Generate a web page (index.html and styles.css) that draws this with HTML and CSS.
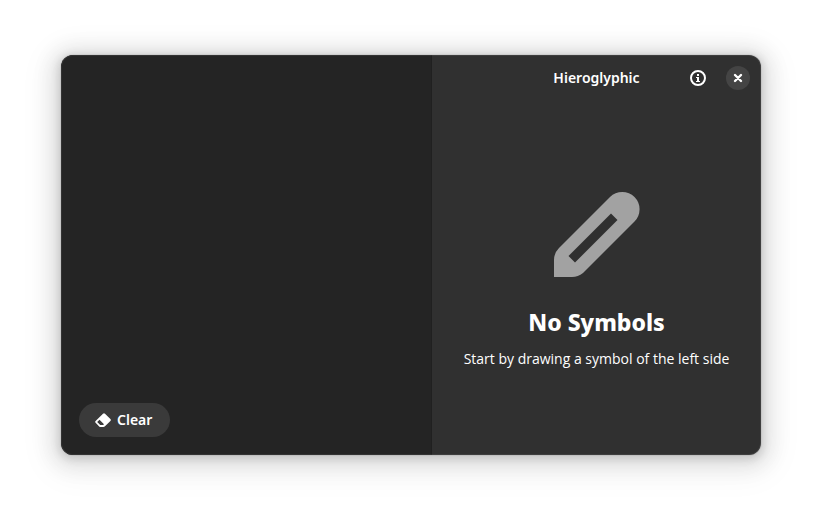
FILE: index.html
```html
<!DOCTYPE html>
<html lang="en">
<head>
<meta charset="utf-8">
<title>Hieroglyphic</title>
<link rel="stylesheet" href="styles.css">
</head>
<body>
<main class="window">
  <section class="canvas" aria-label="Drawing area">
    <button class="clear" type="button">
      <svg width="16" height="16" viewBox="0 0 16 16" aria-hidden="true"><path fill="currentColor" fill-rule="evenodd" d="M8 1.7Q9 .7 10 1.7L15.4 7.1Q16.3 8 15.4 8.9L10 14.3Q9.300 15 8.300 15H5.600Q4.800 15 4.200 14.400L.6 10.800Q-.3 9.800.6 8.900ZM4.500 7.700L2.200 10L5.200 13H8.100L9 12.200Z"/></svg>
      <span>Clear</span>
    </button>
  </section>
  <section class="side">
    <header class="bar">
      <h1 class="title">Hieroglyphic</h1>
      <div class="controls">
        <button class="icon" type="button" aria-label="About">
          <svg width="16" height="16" viewBox="0 0 16 16"><circle cx="8" cy="8" r="7" fill="none" stroke="currentColor" stroke-width="2"/><path fill="currentColor" d="M7 4H9V6H7ZM6 7H9V11H10V12H6V11H7V8H6Z"/></svg>
        </button>
        <button class="icon close" type="button" aria-label="Close">
          <svg width="16" height="16" viewBox="0 0 16 16"><path d="M5 5L11 11M11 5L5 11" stroke="currentColor" stroke-width="2.400" stroke-linecap="round"/></svg>
        </button>
      </div>
    </header>
    <div class="status">
      <svg class="pencil" width="128" height="128" viewBox="0 0 128 128" aria-hidden="true"><path fill="currentColor" fill-rule="evenodd" d="M77 27A17.300 17.300 0 0 1 101.500 51.500L50 103Q45 107 39 107H21V90Q21 83 26 78ZM78 43.500L35.500 86L42 92.500L84.500 50Z"/></svg>
      <h2 class="heading">No Symbols</h2>
      <p class="hint">Start by drawing a symbol of the left side</p>
    </div>
  </section>
</main>
</body>
</html>
```
FILE: styles.css
```css
* { box-sizing: border-box; }

body {
  margin: 0;
  min-height: 100vh;
  padding: 55px 61px 67px;
  display: flex;
  background: #fff;
  color: #fff;
  font-family: "Noto Sans", sans-serif;
  font-size: 14px;
  line-height: 20px;
}

h1, h2, p { margin: 0; }

.window {
  position: relative;
  flex: 1;
  display: grid;
  grid-template-columns: 53fr 47fr;
  border-radius: 12px;
  overflow: hidden;
  background: #303030;
  box-shadow:
    0 2px 8px 2px rgba(0, 0, 0, .13),
    0 3px 20px 10px rgba(0, 0, 0, .09),
    0 6px 32px 16px rgba(0, 0, 0, .04),
    0 0 0 1px rgba(0, 0, 0, .05);
}

.window::after {
  content: "";
  position: absolute;
  inset: 0;
  border-radius: 12px;
  box-shadow: inset 0 0 0 1px rgba(255, 255, 255, .07);
  pointer-events: none;
}

.canvas {
  display: flex;
  align-items: flex-end;
  padding: 18px;
  background: #242424;
  border-right: 1px solid #202020;
}

button {
  border: 0;
  color: inherit;
  font: inherit;
}

.clear {
  display: flex;
  align-items: center;
  gap: 6px;
  height: 34px;
  padding: 0 18px 0 16px;
  border-radius: 17px;
  background: #3a3a3a;
  font-weight: 600;
}

.side {
  display: flex;
  flex-direction: column;
}

.bar {
  display: grid;
  grid-template-columns: 1fr auto 1fr;
  align-items: center;
  height: 46px;
  padding: 0 11px;
}

.title {
  grid-column: 2;
  font-size: 14px;
  font-weight: 600;
}

.controls {
  display: flex;
  justify-content: flex-end;
  gap: 16px;
}

.icon {
  display: grid;
  place-items: center;
  width: 24px;
  height: 24px;
  padding: 0;
  border-radius: 50%;
  background: transparent;
}

.close { background: #444; }

.status {
  flex: 1;
  display: flex;
  flex-direction: column;
  align-items: center;
  padding-top: 69px;
  text-align: center;
}

.pencil { color: #a2a2a2; }

.heading {
  margin-top: 8px;
  font-size: 23px;
  font-weight: 800;
  line-height: 32px;
}

.hint {
  margin-top: 11px;
  font-family: "Open Sans", "Noto Sans", sans-serif;
}
```
